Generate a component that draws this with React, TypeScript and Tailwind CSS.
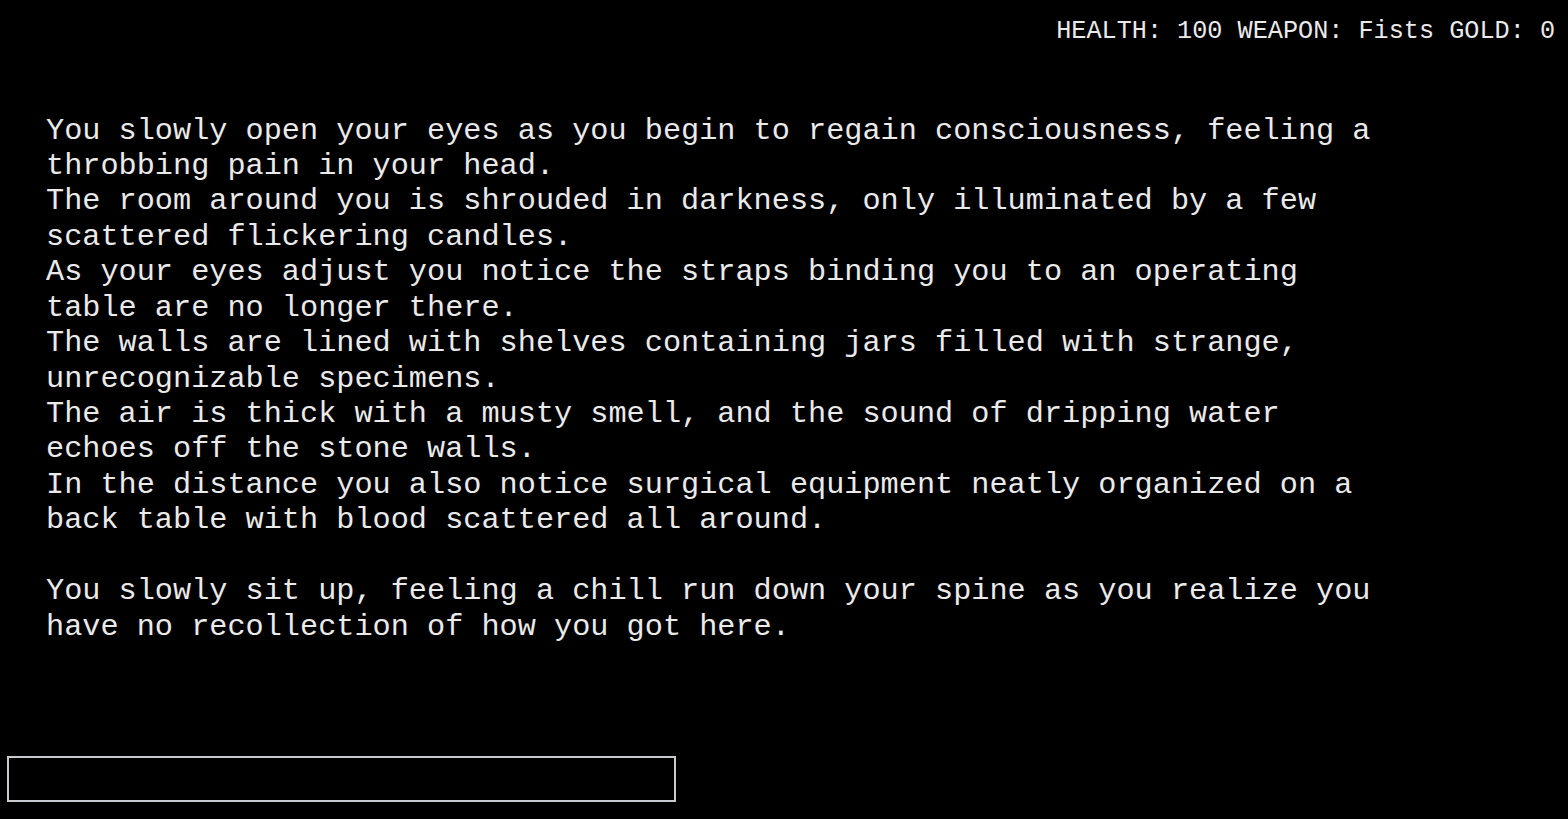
import React, { useState } from 'react';

const lines = [
  'You slowly open your eyes as you begin to regain consciousness, feeling a',
  'throbbing pain in your head.',
  'The room around you is shrouded in darkness, only illuminated by a few',
  'scattered flickering candles.',
  'As your eyes adjust you notice the straps binding you to an operating',
  'table are no longer there.',
  'The walls are lined with shelves containing jars filled with strange,',
  'unrecognizable specimens.',
  'The air is thick with a musty smell, and the sound of dripping water',
  'echoes off the stone walls.',
  'In the distance you also notice surgical equipment neatly organized on a',
  'back table with blood scattered all around.',
  '',
  'You slowly sit up, feeling a chill run down your spine as you realize you',
  'have no recollection of how you got here.',
];

const App: React.FC = () => {
  const [command, setCommand] = useState('');

  return (
    <div className="min-h-screen bg-black text-[#eaeaea] flex flex-col font-['Courier_New','Liberation_Mono',monospace]">
      {/* Stats */}
      <div className="flex justify-end pt-[18px] pr-[13px] text-[25.2px] leading-[28.5px] whitespace-pre">
        HEALTH: 100 WEAPON: Fists GOLD: 0
      </div>

      {/* Story */}
      <div className="mt-[67px] pl-[46px] text-[30.24px] leading-[35.45px] whitespace-pre">
        {lines.map((line, i) => (
          <div key={i} className="h-[35.45px]">
            {line}
          </div>
        ))}
      </div>

      {/* Command input */}
      <div className="mt-auto pl-[7px] pb-[17px]">
        <input
          value={command}
          onChange={(e) => setCommand(e.target.value)}
          className="block w-[669px] h-[46px] bg-black border-2 border-[#c8ccd0] outline-none px-2 text-[20px] text-[#eaeaea]"
        />
      </div>
    </div>
  );
};

export default App;
